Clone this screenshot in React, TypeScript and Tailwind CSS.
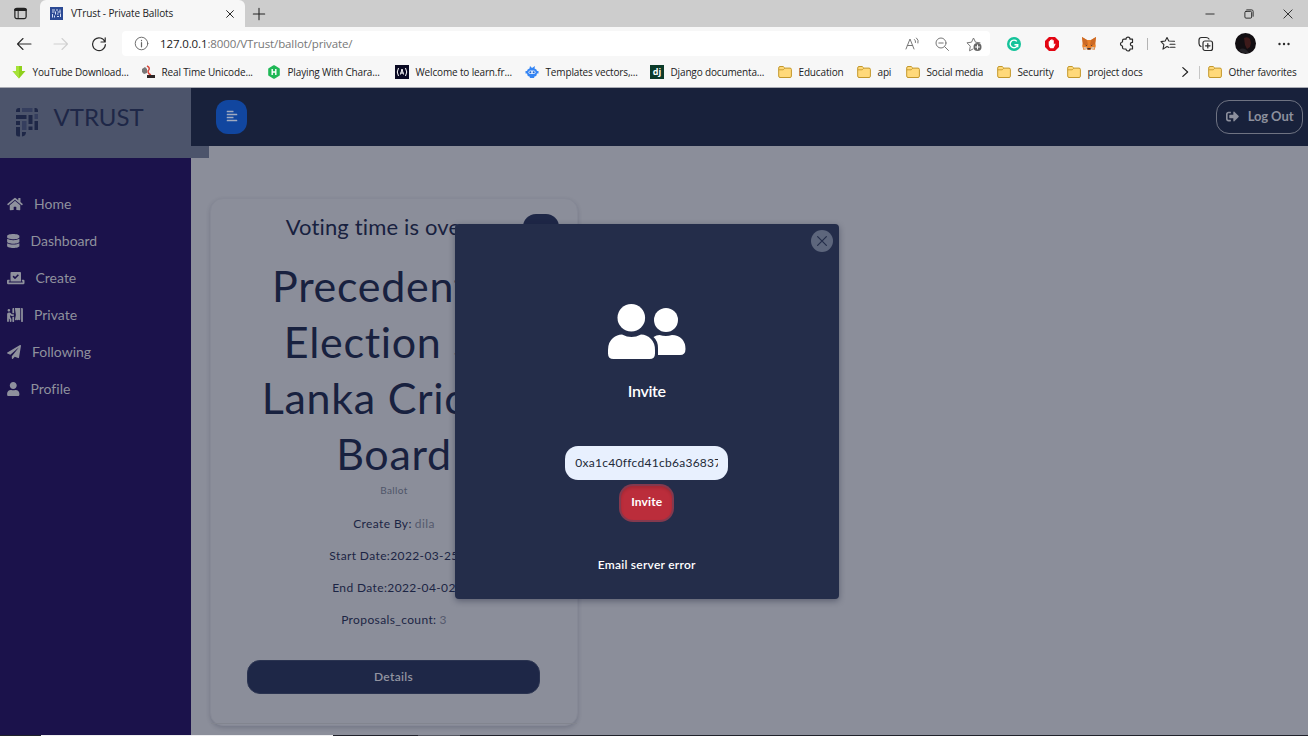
import React, { type ReactNode } from "react";
import {
  FaAlignLeft,
  FaDatabase,
  FaHome,
  FaPaperPlane,
  FaPersonBooth,
  FaSignOutAlt,
  FaUser,
  FaVoteYea,
} from "react-icons/fa";

function Line({ size = "size-4", className = "", children }: { size?: string; className?: string; children: ReactNode }) {
  return (
    <svg
      viewBox="0 0 16 16"
      fill="none"
      stroke="currentColor"
      strokeWidth="1"
      strokeLinecap="round"
      strokeLinejoin="round"
      className={`shrink-0 ${size} ${className}`}
    >
      {children}
    </svg>
  );
}

function TitleBar() {
  return (
    <div className="flex h-[27px] shrink-0 items-center bg-[#cdcdcd] text-[#222]">
      <Line size="size-[15px]" className="ml-[13px]">
        <rect x="2" y="2.5" width="12" height="11" rx="2" strokeWidth="1.3" />
        <path d="M2.500 4h11" strokeWidth="2.6" />
        <path d="M5.500 5v8" />
      </Line>
      <div className="ml-3 flex h-[27px] w-[205px] shrink-0 items-center rounded-t-md bg-[#f7f7f7]">
        <svg viewBox="0 0 13 13" className="ml-[10px] size-[13px] shrink-0">
          <rect width="13" height="13" fill="#2c4a94" />
          <path
            d="M2 3h3M6 3h2M10 2.500v2M2 5h2.500M5.500 4.500v3M7.500 5h3.500M2.500 7v3.500M4.500 8.500v2M7 7h1.500M7 9.500h2M10.500 6.500v3.500"
            stroke="#d5def4"
            strokeWidth="1"
          />
        </svg>
        <span className="ml-2 w-[104px] whitespace-nowrap text-[10px] tracking-[-0.11px]">VTrust - Private Ballots</span>
        <Line size="size-3" className="ml-[49px]">
          <path d="M3.500 3.500l9 9M12.500 3.500l-9 9" strokeWidth="1.300" />
        </Line>
      </div>
      <Line size="size-[14px]" className="ml-[7px]">
        <path d="M8 1.500v13M1.500 8h13" strokeWidth="1.200" />
      </Line>
      <div className="ml-auto flex items-center">
        <Line size="size-3">
          <path d="M2.500 8h11" strokeWidth="1.200" />
        </Line>
        <Line size="size-3" className="ml-[27px]">
          <rect x="2.500" y="4.500" width="9" height="9" rx="1.500" strokeWidth="1.200" />
          <path d="M5 2.500h6.500a2 2 0 0 1 2 2V11" strokeWidth="1.200" />
        </Line>
        <Line size="size-3" className="mr-[14px] ml-[27px]">
          <path d="M2.500 2.500l11 11M13.500 2.500l-11 11" strokeWidth="1.200" />
        </Line>
      </div>
    </div>
  );
}

function Toolbar() {
  return (
    <div className="flex h-[33px] shrink-0 items-center bg-[#f7f7f7] text-[#2b2b2b]">
      <Line className="ml-4">
        <path d="M15 8H1.500M7 2.500L1.500 8 7 13.500" strokeWidth="1.100" />
      </Line>
      <Line className="ml-[21px] text-[#d0d0d0]">
        <path d="M1 8h13.500M9 2.500L14.500 8 9 13.500" strokeWidth="1.100" />
      </Line>
      <Line className="ml-[22px]">
        <path d="M14 6A6.400 6.400 0 1 0 14.400 8.500M14.200 1.800V6H10" strokeWidth="1.200" />
      </Line>
      <div className="ml-[15px] flex h-[25px] w-[868px] shrink-0 items-center rounded-[4px] bg-white text-[#777]">
        <Line size="size-[15px]" className="ml-3 text-[#666]">
          <circle cx="8" cy="8" r="6.700" />
          <path d="M8 7v4.500M8 4.700v.300" strokeWidth="1.300" />
        </Line>
        <span className="ml-[11px] whitespace-nowrap text-[11.500px] tracking-[-0.12px]">
          <span className="text-[#1a1a1a]">127.0.0.1</span>:8000/VTrust/ballot/private/
        </span>
        <Line className="ml-auto">
          <path d="M2 13L6 3l4 10M3.300 9.500h5.400M10.500 3.500q1.500 1.200 1 3M12.500 2q2.500 2 1.500 5" />
        </Line>
        <Line className="ml-[14px]">
          <circle cx="7" cy="7" r="5" />
          <path d="M4.800 7h4.400M10.700 10.700l3.800 3.800" />
        </Line>
        <Line className="mr-2 ml-4">
          <path d="M7 13l-3.500 1.800.8-4.600L1 6.800l4.500-.6L7.500 2l2 4.200 4.500.6" />
          <circle cx="11.500" cy="11" r="4" fill="#666" stroke="none" />
          <path d="M11.500 9v4M9.500 11h4" stroke="#fff" />
        </Line>
      </div>
      <svg viewBox="0 0 16 16" className="ml-4 size-4 shrink-0">
        <circle cx="8" cy="8" r="7" fill="#15c39a" />
        <path d="M10.800 5.400A3.800 3.800 0 1 0 11.700 8.800H8.500M11.700 8.800v2.400" fill="none" stroke="#fff" strokeWidth="1.400" />
      </svg>
      <svg viewBox="0 0 16 16" className="ml-[22px] size-4 shrink-0">
        <path d="M5 1h6l4 4v6l-4 4H5l-4-4V5z" fill="#e30613" />
        <path
          d="M4.700 9V5.400q.7-.8 1.200 0V7.500V4.200q.7-.8 1.300 0V7V3.600q.7-.8 1.400 0V7V4.400q.7-.8 1.200 0v4.200l1-1q1 0 .6.900L9.500 12.200H6.300Q4.900 11 4.700 9z"
          fill="#fff"
        />
      </svg>
      <svg viewBox="0 0 16 16" className="ml-[21px] size-4 shrink-0">
        <path d="M1 1l5 3h4l5-3-.7 6 .5 3-1.300 4L10 13l-1 1H7l-1-1-3.500 1-1.300-4 .5-3z" fill="#e8812b" />
        <path d="M1 1l5 3 1 5-5-.5zM15 1l-5 3-1 5 5-.5z" fill="#cd6a25" />
        <path d="M4.500 8.500l2 1.500H5zM11.500 8.500l-2 1.500H11zM6.500 12h3l.3 1.500H6.200z" fill="#3b2d35" />
        <path d="M2.500 11h3l.5 2-3 .5zM13.500 11h-3l-.5 2 3 .5z" fill="#d9bfa8" />
      </svg>
      <Line className="ml-[22px]">
        <path
          d="M5 3.200h2a2 2 0 0 1 4 0h2.500V6.500a1.700 1.700 0 1 0 0 3.300v3.200H11a2 2 0 0 1-4 0H5q-1.500 0-1.500-1.500V10a2 2 0 0 1 0-4V4.700Q3.500 3.200 5 3.200z"
          strokeWidth="1.200"
        />
      </Line>
      <div className="ml-[12px] h-3 w-px bg-[#b4b4b4]" />
      <Line className="ml-[12px]">
        <path d="M9 11.500l-2-1-4 2.600.9-4.400L1 5.600l4.200-.6L7 1.500 8.800 5l5.700.2M10 8.200h5M10.500 11.200H15" strokeWidth="1.100" />
      </Line>
      <Line className="ml-[22px]">
        <rect x="5" y="5" width="9.500" height="9.500" rx="2" strokeWidth="1.200" />
        <path d="M9.800 7.500v4.500M7.500 9.800H12M3 10.500Q1 9.500 1 7.500V4q0-2.500 2.500-2.500H8q2 0 3 1.500" strokeWidth="1.200" />
      </Line>
      <svg viewBox="0 0 21 21" className="ml-[21px] size-[21px] shrink-0">
        <circle cx="10.500" cy="10.500" r="10.500" fill="#120e12" />
        <path d="M9 5q4-2 6 1l1 4-1 4-3 2-2-4z" fill="#3d1a1a" />
        <path d="M4 17q5-4 10 3-6 1-10-3z" fill="#252328" />
      </svg>
      <svg viewBox="0 0 16 16" fill="currentColor" className="ml-5 size-4 shrink-0">
        <circle cx="3.500" cy="8" r="1.200" />
        <circle cx="8" cy="8" r="1.200" />
        <circle cx="12.500" cy="8" r="1.200" />
      </svg>
    </div>
  );
}

function Folder() {
  return (
    <svg viewBox="0 0 14 14" className="size-[14px] shrink-0">
      <path d="M.7 3q0-1.500 1.300-1.500h3.200l1.600 1.600H12q1.400 0 1.400 1.400v6.600q0 1.400-1.400 1.400H2Q.7 12.500.7 11z" fill="#ffd97a" stroke="#c3982c" strokeWidth="1" />
      <path d="M.8 4.800h4.400l1.600-1.600" fill="none" stroke="#c3982c" strokeWidth=".9" />
    </svg>
  );
}

const YtIcon = (
  <svg viewBox="0 0 14 14" className="size-[14px]">
    <path d="M4 1h6v5h3.500L7 13.500.5 6H4z" fill="#8fd01c" />
    <path d="M4 1h3v12.500L.5 6H4z" fill="#a6e238" />
  </svg>
);
const UniIcon = (
  <svg viewBox="0 0 14 14" className="size-[14px]">
    <path d="M1 4l3-2 2 2v4L3 9 1 7z" fill="#777" />
    <path d="M6 1q4 2 1 5 0 3 3 4" fill="none" stroke="#d9483b" strokeWidth="1.500" />
    <rect x="6" y="10" width="8" height="3" fill="#2e2626" />
  </svg>
);
const RankIcon = (
  <svg viewBox="0 0 14 14" className="size-[14px]">
    <path d="M7 1.200l4.800 2.900v5.800L7 12.800 2.200 9.900V4.100z" fill="#20b857" stroke="#20b857" strokeWidth="2" strokeLinejoin="round" />
    <path d="M5.200 4v6M8.800 4v6M5.200 7h3.600" stroke="#fff" strokeWidth="1.400" />
  </svg>
);
const CampIcon = (
  <svg viewBox="0 0 14 14" className="size-[14px]">
    <rect width="14" height="14" fill="#0a0a23" />
    <path d="M3.500 3q-2.500 4 0 8M10.500 3q2.500 4 0 8M5.500 9.500L7 4l1.500 5.500M5.500 8h3" fill="none" stroke="#fff" />
  </svg>
);
const BotIcon = (
  <svg viewBox="0 0 14 14" className="size-[14px]">
    <path d="M5 1l2 2 3-2-.5 2.500Q12 4 12 6l1.500 0v2.500H12Q12 11 9.500 11.500L9 13H5l-.5-1.500Q2 11 2 8.500H.5V6H2q0-2 2.500-2.500z" fill="#3485f4" />
    <rect x="3.500" y="5.500" width="7" height="3.500" rx="1.700" fill="#dceaff" />
    <circle cx="5.300" cy="7.200" r="1" fill="#2168cf" />
    <circle cx="8.700" cy="7.200" r="1" fill="#2168cf" />
  </svg>
);
const DjIcon = (
  <span className="flex size-[14px] items-center justify-center bg-[#0c3b2a] pb-[2px] text-[9px] leading-none font-bold text-white">dj</span>
);

function Bookmark({ icon, label, width }: { icon?: ReactNode; label: string; width: string }) {
  return (
    <div className={`flex shrink-0 items-center gap-[6.500px] whitespace-nowrap ${width}`}>
      {icon ?? <Folder />}
      <span className="text-[10px] tracking-[-0.150px]">{label}</span>
    </div>
  );
}

function BookmarksBar() {
  return (
    <div className="flex h-[27px] shrink-0 items-center bg-[#f7f7f7] pb-[3px] pl-3 text-[#222]">
      <Bookmark icon={YtIcon} label="YouTube Download..." width="w-[129px]" />
      <Bookmark icon={UniIcon} label="Real Time Unicode..." width="w-[126px]" />
      <Bookmark icon={RankIcon} label="Playing With Chara..." width="w-[128px]" />
      <Bookmark icon={CampIcon} label="Welcome to learn.fr..." width="w-[130px]" />
      <Bookmark icon={BotIcon} label="Templates vectors,..." width="w-[125px]" />
      <Bookmark icon={DjIcon} label="Django documenta..." width="w-[128px]" />
      <Bookmark label="Education" width="w-[79px]" />
      <Bookmark label="api" width="w-[49px]" />
      <Bookmark label="Social media" width="w-[91px]" />
      <Bookmark label="Security" width="w-[70px]" />
      <Bookmark label="project docs" width="w-[111px]" />
      <Line size="size-[14px]">
        <path d="M5.500 3L11 8l-5.500 5" strokeWidth="1.400" />
      </Line>
      <div className="mr-[8px] ml-[7px] h-[13px] w-px bg-[#c6c6c6]" />
      <Bookmark label="Other favorites" width="w-[95px]" />
    </div>
  );
}

function Logo() {
  return (
    <svg viewBox="0 0 24 30" className="h-[30px] w-6 shrink-0">
      <path
        fill="#1e2747"
        d="M1 5V4q0-3 3-3h1v4zM19.500 1h1Q23 1 23 4v1h-3.500zM1 8h10.500v4H1zM13.500 8h4v9h-4zM19.500 14h3.500v9h-3.500zM1 14h4v4H1zM13.500 19.500h4v3.500h-4zM1 20h4v9.500H3.500Q1 29.500 1 27zM7 25h4q0 4-4 4.500z"
      />
      <path fill="#353e5e" d="M7 1h10.500v4H7zM7 14h4.500v9H7zM19.500 7H23v5h-3.500z" />
    </svg>
  );
}

const nav = [
  { label: "Home", Icon: FaHome, box: "w-4" },
  { label: "Dashboard", Icon: FaDatabase, box: "w-[12.500px]" },
  { label: "Create", Icon: FaVoteYea, box: "w-[17.500px]" },
  { label: "Private", Icon: FaPersonBooth, box: "w-4" },
  { label: "Following", Icon: FaPaperPlane, box: "w-[14px]" },
  { label: "Profile", Icon: FaUser, box: "w-[12.500px]" },
];

function Sidebar() {
  return (
    <aside className="flex w-[191px] shrink-0 flex-col bg-[#1b124b]">
      <div className="flex h-[70px] w-[209px] shrink-0 items-start bg-[#4c546b] pt-[19px] pl-[14.500px] text-[#1e2747]">
        <Logo />
        <span className="mt-[-5px] ml-[15px] text-[24px] leading-[30px]">VTRUST</span>
      </div>
      <nav className="mt-[28px] flex flex-col pl-[7px] text-[#8f919d]">
        {nav.map(({ label, Icon, box }) => (
          <a key={label} className="flex h-[36.900px] items-center">
            <Icon className={`h-[14px] shrink-0 ${box}`} />
            <span className="ml-[11px] text-[14px] leading-none">{label}</span>
          </a>
        ))}
      </nav>
    </aside>
  );
}

function Detail({ label, value }: { label: string; value?: string }) {
  return (
    <p className="flex h-8 items-center justify-center text-[12px] tracking-[0.380px] text-[#1c2544]">
      {label}
      {value && <span className="ml-[3px] text-[#555a6d]">{value}</span>}
    </p>
  );
}

function BallotCard() {
  return (
    <article className="relative flex h-[528px] w-[368px] flex-col items-center rounded-[13px] border border-[#868996] bg-[#8b8e9a] text-center whitespace-nowrap text-[#18213f] shadow-[0_2px_4px_rgba(30,35,60,0.2)]">
      <div className="absolute top-[15px] right-[18px] h-[34px] w-9 rounded-[13px] bg-[#1e2747]" />
      <h3 className="mt-[12px] mr-[34px] text-[22px] leading-[32px] tracking-[0.150px]">Voting time is over</h3>
      <h2 className="mt-[15px] flex flex-col items-center text-[43px] leading-[56px] tracking-[0.700px]">
        <span className="mr-[46px]">Precedent</span>
        <span>Election Sri</span>
        <span>Lanka Cricket</span>
        <span>Board</span>
      </h2>
      <p className="mt-[1px] text-[10px] leading-[14px] tracking-[0.400px] text-[#4f5569]">Ballot</p>
      <div className="mt-[11px]">
        <Detail label="Create By:" value="dila" />
        <Detail label="Start Date:2022-03-25" />
        <Detail label="End Date:2022-04-02" />
        <Detail label="Proposals_count:" value="3" />
      </div>
      <button className="mt-6 mr-px h-[34px] w-[293px] shrink-0 rounded-[13px] border border-[#2a3350] bg-[#1e2747] text-[12px] font-semibold tracking-[0.300px] text-[#9294a1]">
        Details
      </button>
      <div className="mt-auto mb-[1px] h-px w-full bg-[#82858f]" />
    </article>
  );
}

function PeopleIcon() {
  return (
    <svg viewBox="0 0 78 55" fill="#fff" className="h-[55px] w-[78px]">
      <circle cx="23.300" cy="13.800" r="13.800" />
      <circle cx="58" cy="16" r="12" />
      <path d="M0 46Q0 38 5 34Q9 30.500 14 30.500Q19 33 23.500 33Q28 33 33 30.500Q39 30.500 43 35Q47 39 47 46V49.500Q47 55 41.500 55H5.500Q0 55 0 49.500Z" />
      <path d="M45.500 33Q48.500 31 51.500 31Q58 33.200 64 31Q70 31 74 35Q77.500 39 77.500 45Q77.500 51 72 51H50V44Q50 37 45.500 33Z" />
    </svg>
  );
}

function InviteDialog() {
  return (
    <div
      role="dialog"
      className="absolute top-[136px] left-[455px] flex h-[375px] w-[383.500px] flex-col items-center rounded-[4px] bg-[#242d4a] whitespace-nowrap text-white shadow-[0_2px_6px_rgba(20,25,50,0.4)]"
    >
      <button className="mt-[6px] mr-[6px] flex size-[22px] shrink-0 items-center justify-center self-end rounded-full bg-[#5d667c] text-[#242d4a]">
        <Line size="size-[14px]">
          <path d="M3 3l10 10M13 3L3 13" strokeWidth="1.400" />
        </Line>
      </button>
      <div className="mt-[52px]">
        <PeopleIcon />
      </div>
      <h4 className="mt-[20px] text-[16px] leading-6 font-semibold tracking-[-0.300px]">Invite</h4>
      <div className="mt-[43px] flex h-[34px] w-[163px] shrink-0 items-center rounded-[13px] bg-[#e8f0fe] px-[10px] pb-px text-[12px] text-[#232a38]">
        <span className="w-full overflow-hidden tracking-[0.280px]">0xa1c40ffcd41cb6a36837</span>
      </div>
      <button className="mt-[6px] h-[34px] w-[51px] shrink-0 rounded-[12px] bg-[#bb2d3b] pb-[2px] text-[12px] font-bold tracking-[0.100px] shadow-[inset_0_2px_3px_rgba(0,0,0,0.12),0_0_0_2px_#84394e]">
        Invite
      </button>
      <p className="mt-[37px] text-[12px] leading-4 font-semibold tracking-[0.240px]">Email server error</p>
    </div>
  );
}

function Taskbar() {
  return (
    <div className="flex h-px shrink-0 bg-[#20222b]">
      <div className="ml-[41px] w-[292px] bg-[#eeeef0]" />
      <div className="ml-[85px] w-[42px] bg-[#555761]" />
    </div>
  );
}

export default function App() {
  return (
    <div className="flex h-[736px] w-[1308px] flex-col overflow-hidden font-['Open_Sans',sans-serif]">
      <TitleBar />
      <Toolbar />
      <BookmarksBar />
      <div className="h-px shrink-0 bg-[#a9abb3]" />
      <div className="relative flex min-h-0 flex-1 bg-[#8b8e9a] font-['Lato',sans-serif] [font-variant-ligatures:none]">
        <Sidebar />
        <main className="flex min-w-0 flex-1 flex-col">
          <header className="relative flex h-[58px] shrink-0 items-center justify-between bg-[#18213b] pr-[5px] pl-[25px]">
            <button className="flex h-[34px] w-[31px] items-center justify-center rounded-[12px] bg-[#11469f] pb-[2px] text-[#a0aac0]">
              <FaAlignLeft className="size-3" />
            </button>
            <button className="flex h-[34px] w-[87px] items-center justify-center rounded-[13px] border border-[#6f7382] pb-[2px] text-[#8d909d]">
              <FaSignOutAlt className="size-[13px]" />
              <span className="ml-[9px] text-[13px] leading-none font-bold tracking-[-0.100px] whitespace-nowrap">Log Out</span>
            </button>
          </header>
          <div className="mt-[52px] ml-[19px]">
            <BallotCard />
          </div>
        </main>
        <InviteDialog />
      </div>
      <Taskbar />
    </div>
  );
}
